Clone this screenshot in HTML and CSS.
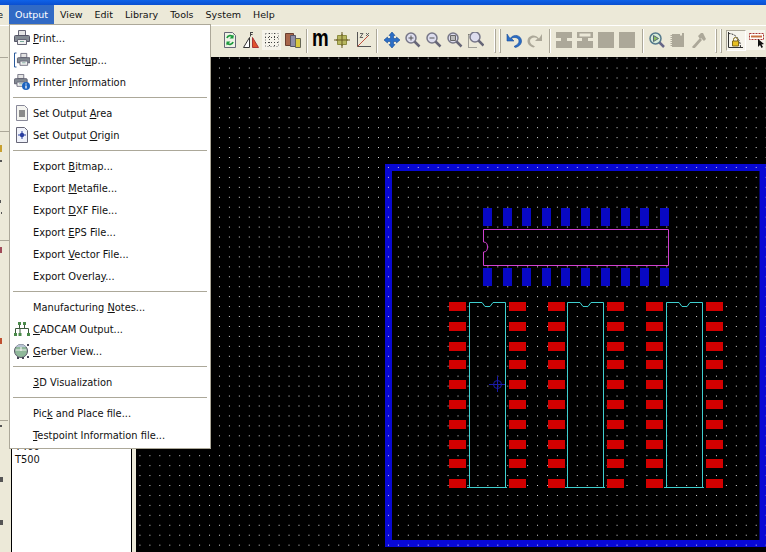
FILE: index.html
```html
<!doctype html>
<html lang="en">
<head>
  <meta charset="UTF-8">
  <meta name="viewport" content="width=device-width, initial-scale=1.0">
  <title>PCB Editor</title>
  <link rel="stylesheet" href="styles.css">
</head>
<body>
  <div class="titlebar"></div>

  <div class="menubar">
    <span class="menubar-item first"><span class="first-label">File</span></span>
    <span class="menubar-item active">Output</span>
    <span class="menubar-item">View</span>
    <span class="menubar-item">Edit</span>
    <span class="menubar-item">Library</span>
    <span class="menubar-item">Tools</span>
    <span class="menubar-item">System</span>
    <span class="menubar-item">Help</span>
  </div>

  <div class="toolbar">
    <svg class="tool" viewBox="0 0 16 16"><path d="M2.500 .5h8l3 3v12h-11z" fill="#eef3e6" stroke="#667"/><path d="M5 6a3.4 3.4 0 0 1 6-1M11 10a3.4 3.4 0 0 1-6 1" fill="none" stroke="#1c9a3c" stroke-width="1.8"/><path d="M11.5 2.5v4h-4zM4.500 13.500v-4h4z" fill="#1c9a3c"/></svg>
    <svg class="tool" viewBox="0 0 16 16"><path d="M6.500 5.500v10h-6z" fill="#fff" stroke="#333"/><path d="M9.500 5.500l6 10h-6z" fill="#e0522a" stroke="#a33"/><path d="M7 .5h3M7.500 .5v4M7.500 2.500h2" stroke="#444" fill="none"/></svg>
    <span class="hot-wrap"><svg class="tool" viewBox="0 0 16 16"><path d="M1.500 1.500h13v13h-13z" fill="none" stroke="#777" stroke-dasharray="1 2"/><path d="M1 5.500h14M1 10.500h14M5.500 1v14M10.500 1v14" stroke="#444" stroke-dasharray="1 2"/></svg></span>
    <svg class="tool" viewBox="0 0 16 16"><path d="M.5 1.500h8v12h-8z" fill="#a8664a" stroke="#6a4030"/><path d="M5.500 3.500h5v11h-5z" fill="#8f8fa8" stroke="#556"/><path d="M10.500 6.500h5v9h-5z" fill="#d8c840" stroke="#665"/></svg>
    <span class="sep"></span>
    <span class="tool tool-m">m</span>
    <svg class="tool" viewBox="0 0 16 16"><path d="M8 0v16M0 8h16" stroke="#665a20"/><path d="M3.500 3.500h9v9h-9z" fill="#b8b860" stroke="#8c8c40"/><path d="M8 2v12M2 8h12" stroke="#665a20"/></svg>
    <svg class="tool" viewBox="0 0 16 16"><path d="M2.500 0v14.500H16" fill="none" stroke="#555"/><path d="M2.500 14.500L14 3" stroke="#c2503c"/><path d="M5 1.500h3l-3 4h3M11 1l3 3M14 1l-3 3" fill="none" stroke="#555" stroke-width=".9"/></svg>
    <span class="sep sep-b"></span>
    <svg class="tool" viewBox="0 0 16 16"><path d="M8 0l3 3.500H9.500v3h3V5L16 8l-3.500 3V9.500h-3v3H11L8 16l-3-3.500h1.500v-3h-3V11L0 8l3.500-3v1.500h3v-3H5z" fill="#2a6ec8" stroke="#144a94" stroke-width=".6"/></svg>
    <svg class="tool" viewBox="0 0 16 16"><use href="#glass"/><path d="M3.500 6h5M6 3.500v5" stroke="#555"/></svg>
    <svg class="tool" viewBox="0 0 16 16"><use href="#glass"/><path d="M3.500 6h5" stroke="#555"/></svg>
    <svg class="tool" viewBox="0 0 16 16"><use href="#glass"/><path d="M3.500 3.500h5v5h-5z" fill="#bbb" stroke="#666"/></svg>
    <svg class="tool" viewBox="0 0 16 16"><path d="M.5 2.500h7M.5 2.500v13h9" fill="none" stroke="#555" stroke-dasharray="1 1"/><use href="#glass" x="1" y="-1"/></svg>
    <span class="handle"></span>
    <span class="handle"></span>
    <svg class="tool" viewBox="0 0 16 16"><path d="M4 6.500L1 2v7h7L5.500 6.500C8 4.500 13 5.500 13 9c0 2.500-2 4-5 5.500l1.500 1C14 14 15.500 11.500 15.500 9 15.500 3.500 8 1 4 6.500z" fill="#2a6ec8" stroke="#1a4c96" stroke-width=".6"/></svg>
    <svg class="tool" viewBox="0 0 16 16"><path d="M12 6.500L15 2v7H8l2.500-2.500C8 4.500 3 5.500 3 9c0 2.500 2 4 5 5.500l-1.500 1C2 14 .5 11.500 .5 9 .5 3.500 8 1 12 6.500z" fill="#aca899"/></svg>
    <span class="sep sep-c"></span>
    <svg class="tool" viewBox="0 0 16 16"><path d="M0 0h16v6h-5v3h5v7H0V9h5V6H0z" fill="#aca899"/></svg>
    <svg class="tool" viewBox="0 0 16 16"><path d="M0 0h16v6h-5v3h5v7H0V9h5V6H0z" fill="#aca899"/><path d="M2.500 1.500h11v3h-11z" fill="#ece9d8"/></svg>
    <svg class="tool" viewBox="0 0 16 16"><path d="M0 0h16v16H0z" fill="#aca899"/></svg>
    <svg class="tool" viewBox="0 0 16 16"><path d="M0 0h16v16H0z" fill="#aca899"/></svg>
    <span class="sep sep-d"></span>
    <svg class="tool" viewBox="0 0 16 16"><circle cx="6.500" cy="6.500" r="5.500" fill="#d8ecd8" stroke="#557a8c" stroke-width="1.500"/><path d="M10.500 10.500l4.500 4.500" stroke="#668" stroke-width="2.500"/><path d="M4.500 3.500l5 3-5 3z" fill="#8cc060" stroke="#567"/></svg>
    <svg class="tool" viewBox="0 0 16 16"><path d="M2 2h8v1.500h2V1h2v14H2v-1H.5v-1H2v-1H.5v-1H2v-1H.5V9H2V8H.5V7H2V6H.5V5H2V4H.5V3H2z" fill="#aca899"/></svg>
    <svg class="tool" viewBox="0 0 16 16"><path d="M1 15l8-9 2 2-8 9z" fill="#aca899"/><path d="M7 4l3-3 2 0 3 6-2 2-3-3-1 1z" fill="#aca899"/></svg>
    <span class="handle handle-d"></span>
    <span class="handle"></span>
    <span class="pressed"><svg class="tool" viewBox="0 0 16 16"><path d="M1.500 0v15.500H16" fill="none" stroke="#333"/><path d="M1.500 1.500c7 0 12 6 12 14" fill="none" stroke="#333" stroke-dasharray="2 1"/><path d="M5.500 9h6v5h-6z" fill="#e8c020" stroke="#806818"/><path d="M6.500 9V7.500a2 2 0 0 1 4 0V9" fill="none" stroke="#806818"/></svg></span>
    <span class="hot-wrap hot-last"><svg class="tool" viewBox="0 0 16 16"><path d="M1.500 1.500h14v6h-14z" fill="#fff" stroke="#a33" stroke-dasharray="2 1"/><path d="M3 3.500h11v2H3z" fill="#c87040"/><path d="M10 7l0 8 2-2 1.500 3 1.500-1-1.500-2.500 2.500-.5z" fill="#111"/></svg></span>
  </div>

  <div class="main">
    <div class="left-panel">
      <svg class="left-strip" viewBox="0 0 11 495" width="11" height="495">
        <path d="M0 0h8v1H0zM0 74h9v1H0zM0 183h9v1H0zM0 363h8v1H0z" fill="#aca899"/>
        <path d="M0 88h2v7H0z" fill="#c8a030"/>
        <path d="M0 103h2v2H0zM0 143h1v3H0zM1 155h1v2H1zM0 368h2v2H0zM0 420h3v5H0zM0 463h3v5H0z" fill="#555"/>
        <path d="M0 190h2v6H0z" fill="#a04a58"/>
        <path d="M0 281h2v6H0z" fill="#c05030"/>
      </svg>
      <ul class="list">
        <li>T400</li>
        <li>T500</li>
      </ul>
    </div>

    <svg class="board" viewBox="136 57 630 495" width="630" height="495">
      <defs>
        <pattern id="grid" patternUnits="userSpaceOnUse" x="378" y="157" width="9.94" height="9.94">
          <rect width="1" height="1" fill="#d4d4d4"/>
        </pattern>
        <g id="glass">
          <circle cx="6" cy="6" r="5" fill="#dde" stroke="#778" stroke-width="1.500"/>
          <path d="M9.500 9.500l5 5" stroke="#667" stroke-width="2.500"/>
        </g>
        <g id="blue-pads" fill="#0808c4">
          <rect x="483" width="9" height="18"/>
          <rect x="503" width="9" height="18"/>
          <rect x="522" width="9" height="18"/>
          <rect x="542" width="9" height="18"/>
          <rect x="561" width="9" height="18"/>
          <rect x="581" width="9" height="18"/>
          <rect x="601" width="9" height="18"/>
          <rect x="621" width="9" height="18"/>
          <rect x="640" width="9" height="18"/>
          <rect x="660" width="9" height="18"/>
        </g>
        <g id="red-pads" fill="#d20000">
          <rect y="302" width="17" height="9"/>
          <rect y="322" width="17" height="9"/>
          <rect y="342" width="17" height="9"/>
          <rect y="360" width="17" height="9"/>
          <rect y="380" width="17" height="9"/>
          <rect y="400" width="17" height="9"/>
          <rect y="420" width="17" height="9"/>
          <rect y="440" width="17" height="9"/>
          <rect y="459" width="17" height="9"/>
          <rect y="479" width="17" height="9"/>
        </g>
        <path id="dip" d="M467 487.500h40M469.500 487.500V302.500h12.500l3 4h5l3-4h12.500v185" fill="none" stroke="#3fd0d0"/>
      </defs>
      <rect x="136" y="57" width="630" height="495" fill="#000"/>
      <path d="M388.500 543.500V167.500H763V543.500z" fill="none" stroke="#0808d4" stroke-width="7"/>
      <rect x="136" y="57" width="630" height="495" fill="url(#grid)"/>
      <use href="#blue-pads" y="208"/>
      <use href="#blue-pads" y="268"/>
      <path d="M483.500 229.500h185v36h-185V252c3 0 4-2 4-5s-1-5-4-5z" fill="none" stroke="#d040d0"/>
      <use href="#red-pads" x="449"/>
      <use href="#red-pads" x="509"/>
      <use href="#red-pads" x="548"/>
      <use href="#red-pads" x="607"/>
      <use href="#red-pads" x="646"/>
      <use href="#red-pads" x="706"/>
      <use href="#dip"/>
      <use href="#dip" x="98"/>
      <use href="#dip" x="197"/>
      <g fill="none" stroke="#1a1aa8">
        <path d="M489 384.500h16M497.500 376v16"/>
        <circle cx="497.500" cy="384.500" r="4"/>
      </g>
    </svg>
  </div>

  <div class="menu">
    <div class="menu-item">
      <svg class="menu-icon" viewBox="0 0 16 16"><use href="#printer"/></svg>
      <span><u>P</u>rint...</span>
    </div>
    <div class="menu-item">
      <svg class="menu-icon" viewBox="0 0 16 16"><path d="M2.500 1H.5v14h2" fill="none" stroke="#2a5a9c"/><use href="#printer" transform="translate(3 1) scale(.85)"/></svg>
      <span>Printer Set<u>u</u>p...</span>
    </div>
    <div class="menu-item">
      <svg class="menu-icon" viewBox="0 0 16 16"><use href="#printer" transform="scale(.85)"/><circle cx="12" cy="12" r="4" fill="#1c64c0"/><path d="M12 9.500v1M12 11.500v3" stroke="#fff" stroke-width="1.300"/></svg>
      <span>Printer <u>I</u>nformation</span>
    </div>
    <div class="menu-sep"></div>
    <div class="menu-item">
      <svg class="menu-icon" viewBox="0 0 16 16"><path d="M2.500 .5h8l3 3v12h-11z" fill="#f4f4f0" stroke="#889"/><path d="M5 5h6v7H5z" fill="#8a8a8a"/></svg>
      <span>Set Output <u>A</u>rea</span>
    </div>
    <div class="menu-item">
      <svg class="menu-icon" viewBox="0 0 16 16"><path d="M2.500 .5h8l3 3v12h-11z" fill="#f0f2fa" stroke="#667"/><path d="M8 4v8M4 8h8" stroke="#2a3ea0"/><circle cx="8" cy="8" r="2.200" fill="#2a3ea0"/></svg>
      <span>Set Output <u>O</u>rigin</span>
    </div>
    <div class="menu-sep"></div>
    <div class="menu-item"><span class="menu-blank"></span><span>Export <u>B</u>itmap...</span></div>
    <div class="menu-item"><span class="menu-blank"></span><span>Export <u>M</u>etafile...</span></div>
    <div class="menu-item"><span class="menu-blank"></span><span>Export <u>D</u>XF File...</span></div>
    <div class="menu-item"><span class="menu-blank"></span><span>Export <u>E</u>PS File...</span></div>
    <div class="menu-item"><span class="menu-blank"></span><span>Export <u>V</u>ector File...</span></div>
    <div class="menu-item"><span class="menu-blank"></span><span>Export Overla<u>y</u>...</span></div>
    <div class="menu-sep"></div>
    <div class="menu-item"><span class="menu-blank"></span><span>Manufacturing <u>N</u>otes...</span></div>
    <div class="menu-item">
      <svg class="menu-icon" viewBox="0 0 16 16"><path d="M1.500 15V7.500h13V15M5.500 7.500V2M10.500 7.500V2M6 15V7.500" fill="none" stroke="#3c5a3c"/><path d="M4 1h3v3H4zM9 1h3v3H9zM0 12h3v3H0zM4.500 12h3v3h-3zM13 12h3v3h-3z" fill="#4a8a4a"/></svg>
      <span><u>C</u>ADCAM Output...</span>
    </div>
    <div class="menu-item">
      <svg class="menu-icon" viewBox="0 0 16 16"><circle cx="7" cy="8" r="6.500" fill="#8fb89a" stroke="#556"/><path d="M1.500 7h11M7 2v6" stroke="#eee" stroke-width="1.200"/><path d="M2 4a6 6 0 0 1 10 0z" fill="#b8c4d4"/><path d="M13 1h2v2h-2zM13 13h2v2h-2zM3 14h2v2H3zM8 14h2v2H8z" fill="#445"/></svg>
      <span><u>G</u>erber View...</span>
    </div>
    <div class="menu-sep"></div>
    <div class="menu-item"><span class="menu-blank"></span><span><u>3</u>D Visualization</span></div>
    <div class="menu-sep"></div>
    <div class="menu-item"><span class="menu-blank"></span><span>Pic<u>k</u> and Place file...</span></div>
    <div class="menu-item"><span class="menu-blank"></span><span><u>T</u>estpoint Information file...</span></div>
  </div>

  <svg class="defs-only" width="0" height="0">
    <defs>
      <g id="printer">
        <path d="M4.500 .5h7v5h-7z" fill="#e4e4e4" stroke="#667"/>
        <path d="M.5 6.500a1 1 0 0 1 1-1h13a1 1 0 0 1 1 1v5h-15z" fill="#838a92" stroke="#556"/>
        <path d="M3.500 9.500h9v5h-9z" fill="#f0f0f0" stroke="#667"/>
        <path d="M6 11.500h4" stroke="#7a9"/>
      </g>
    </defs>
  </svg>
</body>
</html>
```

FILE: styles.css
```css
html, body {
  margin: 0;
  padding: 0;
}

body {
  width: 766px;
  height: 552px;
  overflow: hidden;
  position: relative;
  background: #ece9d8;
  font-family: "DejaVu Sans", Tahoma, sans-serif;
  font-size: 9.85px;
  color: #111;
}

.titlebar {
  height: 5px;
  background: linear-gradient(#0f62e8, #0a4fd0);
}

.menubar {
  height: 20px;
  display: flex;
  align-items: stretch;
  background: #ece9d8;
  font-size: 9.5px;
  line-height: 19px;
  overflow: hidden;
}

.menubar-item {
  padding: 0 6px;
}

/* only the last letter of File shows at the window edge */
.menubar-item.first {
  flex: none;
  width: 9px;
  box-sizing: border-box;
  padding: 0 6px 0 0;
  display: flex;
  justify-content: flex-end;
}

.first-label {
  flex: none;
  width: 3px;
  display: flex;
  justify-content: flex-end;
  overflow: hidden;
}

.menubar-item.active {
  background: #316ac5;
  color: #fff;
}

.toolbar {
  height: 32px;
  box-sizing: border-box;
  border-top: 1px solid #fff;
  padding-left: 222px;
  padding-top: 6px;
  display: flex;
  align-items: flex-start;
  overflow: hidden;
}

.tool {
  flex: none;
  display: block;
  width: 16px;
  height: 16px;
  margin-right: 5px;
}

.tool-m {
  font-family: "Liberation Sans", sans-serif;
  font-weight: bold;
  font-size: 24px;
  line-height: 12px;
  color: #000;
  margin-left: -1px;
  margin-right: 6px;
  transform: scaleX(.78);
  transform-origin: left top;
}

.hot-wrap {
  flex: none;
  width: 21px;
  height: 16px;
  position: relative;
}

.hot-wrap::before {
  content: "";
  position: absolute;
  left: -2px;
  top: -2px;
  width: 19px;
  height: 20px;
  background: #f6f4ec;
}

.hot-wrap .tool {
  position: relative;
}

.pressed {
  flex: none;
  width: 21px;
  height: 16px;
  position: relative;
}

.pressed::before {
  content: "";
  position: absolute;
  left: -1px;
  top: -2px;
  width: 18px;
  height: 19px;
  background: #f6f4ec;
  border: 1px solid #aca899;
  border-right-color: #fff;
  border-bottom-color: #fff;
}

.pressed .tool {
  position: relative;
}

.sep {
  flex: none;
  width: 1px;
  height: 24px;
  margin-top: -3px;
  margin-right: 5px;
  background: #aca899;
  border-right: 1px solid #fff;
}

.sep-b {
  margin-right: 6px;
}

.sep-c {
  margin-left: 1px;
}

.sep-d {
  margin-left: 2px;
}

.handle {
  flex: none;
  width: 2px;
  height: 24px;
  margin-top: -3px;
  margin-left: 5px;
  box-sizing: border-box;
  border-left: 1px solid #fff;
  border-right: 1px solid #aca899;
  border-bottom: 1px solid #aca899;
}

.handle + .handle {
  margin-left: 3px;
  margin-right: 5px;
}

.handle-d {
  margin-left: 3px;
}

.main {
  display: flex;
  height: 495px;
}

.left-panel {
  flex: none;
  width: 136px;
  display: flex;
  background: #ece9d8;
}

.left-strip {
  flex: none;
  display: block;
}

.list {
  list-style: none;
  margin: 0;
  width: 121px;
  height: 495px;
  box-sizing: border-box;
  padding: 383px 0 0 3px;
  background: #fff;
  border-left: 1px solid #000;
  border-right: 1px solid #000;
}

.list li {
  height: 13px;
  line-height: 13px;
}

.board {
  display: block;
  flex: none;
}

.menu {
  position: absolute;
  left: 9px;
  top: 24px;
  width: 202px;
  height: 425px;
  box-sizing: border-box;
  padding-top: 2px;
  background: #fff;
  border: 1px solid #aca899;
}

.menu-item {
  height: 22px;
  display: flex;
  align-items: center;
  white-space: nowrap;
}

.menu-item u {
  text-underline-offset: 1px;
}

.menu-icon {
  flex: none;
  width: 16px;
  height: 16px;
  margin-left: 4px;
  margin-right: 3px;
}

.menu-blank {
  flex: none;
  width: 23px;
}

.menu-sep {
  height: 1px;
  margin: 4px 3px;
  background: #aca899;
}

.defs-only {
  position: absolute;
}
```
